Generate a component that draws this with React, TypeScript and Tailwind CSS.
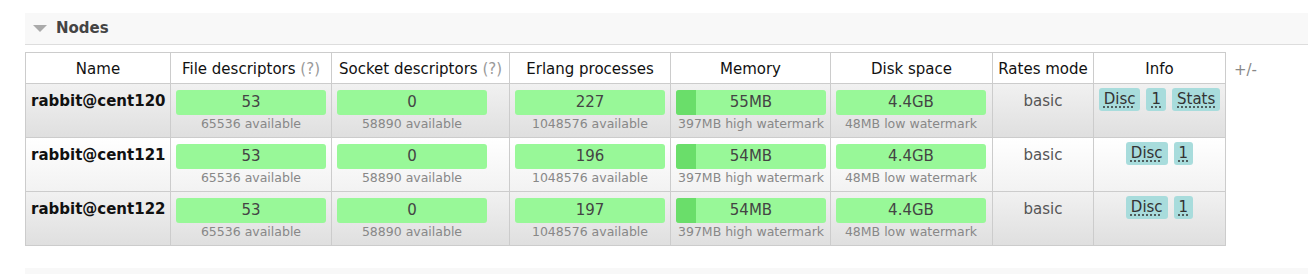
import React from "react";

type Node = {
  name: string;
  fd: string;
  sock: string;
  proc: string;
  procAvail: string;
  mem: string;
  disk: string;
  stats: boolean;
};

const nodes: Node[] = [
  { name: "rabbit@cent120", fd: "53", sock: "0", proc: "227", procAvail: "1048576", mem: "55MB", disk: "4.4GB", stats: true },
  { name: "rabbit@cent121", fd: "53", sock: "0", proc: "196", procAvail: "1048576", mem: "54MB", disk: "4.4GB", stats: false },
  { name: "rabbit@cent122", fd: "53", sock: "0", proc: "197", procAvail: "1048576", mem: "54MB", disk: "4.4GB", stats: false },
];

function Bar({ value, sub, used }: { value: string; sub: string; used?: number }) {
  return (
    <div className="w-[150px] flex flex-col items-center">
      <div className="relative w-[150px] h-[25px] rounded-[3px] bg-[#98f898] overflow-hidden">
        {used !== undefined && (
          <div className="absolute left-0 top-0 h-full bg-[#6ade6a]" style={{ width: used }} />
        )}
        <div className="relative text-center text-[15px] leading-[25px] text-[#444]">{value}</div>
      </div>
      <div className="text-[12.5px] leading-[17px] text-[#888] whitespace-nowrap">{sub}</div>
    </div>
  );
}

function Badge({ children }: { children: React.ReactNode }) {
  return (
    <span className="inline-block rounded-[3px] bg-[#a8dcdc] px-[5px] h-[23px] leading-[23px] text-[15px] text-[#333]">
      <span className="underline decoration-dotted decoration-[#333] underline-offset-[3px]">{children}</span>
    </span>
  );
}

export default function App() {
  const th = "border border-[#ccc] font-normal text-[15px] text-[#111] h-[31px] p-0 pt-[2px] text-center";
  const td = "border border-[#ccc] align-top pl-[5px] pr-[5px] pt-[6px] pb-0";
  return (
    <div className="bg-white w-[1308px] h-[274px] pt-[13px] font-['DejaVu_Sans',Verdana,sans-serif]">
      <div className="ml-[25px] h-[32px] bg-[#f8f8f8] border-b border-[#ddd] flex items-center">
        <span className="ml-[8px] w-0 h-0 border-l-[7px] border-r-[7px] border-t-[7px] border-l-transparent border-r-transparent border-t-[#aaa]" />
        <span className="ml-[9px] font-bold text-[15px] text-[#444]">Nodes</span>
      </div>
      <div className="flex items-start mt-[7px] ml-[25px]">
        <table className="table-fixed border-collapse w-[1200px]">
          <colgroup>
            <col className="w-[145px]" />
            <col className="w-[161px]" />
            <col className="w-[178px]" />
            <col className="w-[161px]" />
            <col className="w-[160px]" />
            <col className="w-[162px]" />
            <col className="w-[101px]" />
            <col className="w-[132px]" />
          </colgroup>
          <thead>
            <tr className="bg-white">
              <th className={th}>Name</th>
              <th className={th}>File descriptors <span className="text-[#999]">(?)</span></th>
              <th className={th}>Socket descriptors <span className="text-[#999]">(?)</span></th>
              <th className={th}>Erlang processes</th>
              <th className={th}>Memory</th>
              <th className={th}>Disk space</th>
              <th className={th}>Rates mode</th>
              <th className={th}>Info</th>
            </tr>
          </thead>
          <tbody>
            {nodes.map((n, i) => (
              <tr
                key={n.name}
                className={`h-[54px] ${i % 2 === 0 ? "bg-gradient-to-b from-[#f1f1f1] to-[#dfdfdf]" : "bg-gradient-to-b from-white to-[#f2f2f2]"}`}
              >
                <td className={`${td} pt-[6px] font-bold text-[15px] text-[#111] text-center`}>{n.name}</td>
                <td className={td}>
                  <Bar value={n.fd} sub="65536 available" />
                </td>
                <td className={td}>
                  <Bar value={n.sock} sub="58890 available" />
                </td>
                <td className={td}>
                  <Bar value={n.proc} sub={`${n.procAvail} available`} />
                </td>
                <td className={td}>
                  <Bar value={n.mem} sub="397MB high watermark" used={20} />
                </td>
                <td className={td}>
                  <Bar value={n.disk} sub="48MB low watermark" />
                </td>
                <td className={`${td} pt-[6px] text-center text-[15px] text-[#555]`}>basic</td>
                <td className={`border border-[#ccc] align-top p-0 pt-[4px]`}>
                  <div className="flex justify-center gap-[6px]">
                    <Badge>Disc</Badge>
                    <Badge>1</Badge>
                    {n.stats && <Badge>Stats</Badge>}
                  </div>
                </td>
              </tr>
            ))}
          </tbody>
        </table>
        <span className="ml-[8px] mt-[7px] text-[15px] text-[#888]">+/-</span>
      </div>
      <div className="ml-[25px] mt-[22px] h-[8px] bg-[#f8f8f8]" />
    </div>
  );
}
